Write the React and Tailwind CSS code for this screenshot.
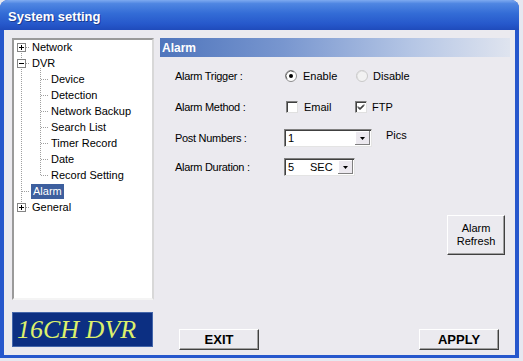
const treeRows = [
    { label: 'Network', level: 0, box: '+' },
    { label: 'DVR', level: 0, box: '-' },
    { label: 'Device', level: 1 },
    { label: 'Detection', level: 1 },
    { label: 'Network Backup', level: 1 },
    { label: 'Search List', level: 1 },
    { label: 'Timer Record', level: 1 },
    { label: 'Date', level: 1 },
    { label: 'Record Setting', level: 1 },
    { label: 'Alarm', level: 0, selected: true },
    { label: 'General', level: 0, box: '+' },
];

function TreeLines() {
    const cy = (i) => 7 + 16 * i;
    return (
        <svg className="absolute inset-0 pointer-events-none" width="140" height="260">
            <g stroke="#a0a0a0" strokeWidth="1" strokeDasharray="1 1" shapeRendering="crispEdges">
                <line x1="7.5" y1={cy(0)} x2="7.5" y2={cy(10)} />
                <line x1="26.5" y1={cy(1) + 5} x2="26.5" y2={cy(8)} />
                {treeRows.map((r, i) =>
                    r.level === 0 ? (
                        <line key={i} x1="8" y1={cy(i) + 0.5} x2="16" y2={cy(i) + 0.5} />
                    ) : (
                        <line key={i} x1="27" y1={cy(i) + 0.5} x2="35" y2={cy(i) + 0.5} />
                    )
                )}
            </g>
            {treeRows.map((r, i) =>
                r.box ? (
                    <g key={'b' + i} shapeRendering="crispEdges">
                        <rect x="3.5" y={cy(i) - 4 + 0.5} width="8" height="8" fill="#fff" stroke="#848484" />
                        <line x1="5" y1={cy(i) + 0.5} x2="10" y2={cy(i) + 0.5} stroke="#000" />
                        {r.box === '+' && (
                            <line x1="7.5" y1={cy(i) - 2} x2="7.5" y2={cy(i) + 3} stroke="#000" />
                        )}
                    </g>
                ) : null
            )}
        </svg>
    );
}

function Radio({ checked, faded }) {
    return (
        <svg width="12" height="12" viewBox="0 0 12 12">
            <circle cx="6" cy="6" r="5.5" fill={faded ? '#f2f2f2' : '#fff'} stroke={faded ? '#c8c8c8' : '#8c8c8c'} />
            <path d="M2 9 A5 5 0 0 1 9 2" fill="none" stroke={faded ? '#d8d8d8' : '#6c6c6c'} />
            {checked && <circle cx="6" cy="6" r="2" fill="#000" />}
        </svg>
    );
}

function Checkbox({ checked }) {
    return (
        <div className="w-[12px] h-[12px] bg-white border border-t-[#808080] border-l-[#808080] border-b-[#e0e0e0] border-r-[#e0e0e0] shadow-[inset_1px_1px_#404040] flex items-center justify-center">
            {checked && (
                <svg width="8" height="8" viewBox="0 0 8 8">
                    <path d="M1 3.5 L3 5.5 L7 1.5 M1 4.5 L3 6.5 L7 2.5" fill="none" stroke="#000" strokeWidth="1" />
                </svg>
            )}
        </div>
    );
}

function Combo({ width, children }) {
    return (
        <div
            className="h-[18px] bg-white border border-t-[#808080] border-l-[#808080] border-b-[#e4e4e4] border-r-[#e4e4e4] shadow-[inset_1px_1px_#404040] flex items-center"
            style={{ width }}
        >
            <div className="flex-1 pl-[3px] pt-[1px] flex items-center">{children}</div>
            <div className="w-[15px] h-[14px] mr-[1px] bg-[#ece9ef] shadow-[inset_-1px_-1px_#808080,inset_1px_1px_#fff] flex items-center justify-center">
                <svg width="5" height="3" viewBox="0 0 5 3">
                    <path d="M0 0 H5 L2.5 3 Z" fill="#000" />
                </svg>
            </div>
        </div>
    );
}

function Button({ className, children }) {
    return (
        <div
            className={
                'bg-[#ebeaef] border border-t-[#ffffff] border-l-[#ffffff] border-b-[#404040] border-r-[#404040] shadow-[inset_-1px_-1px_#a0a0a0] flex items-center justify-center text-black ' +
                className
            }
        >
            {children}
        </div>
    );
}

export default function App() {
    return (
        <div className="w-[523px] h-[361px] bg-[#e6e8f0] overflow-hidden font-['Liberation_Sans',Arial,sans-serif]">
            <div className="w-[519px] h-[358px] rounded-t-[8px] overflow-hidden bg-[#2657cc] flex flex-col">
                {/* Title bar */}
                <div className="h-[30px] shrink-0 bg-[linear-gradient(to_bottom,#7eaaf0_0%,#4f86e2_12%,#336cd6_45%,#2658cb_80%,#1f4bbb_100%)] flex items-center pl-[8px] pt-[3px]">
                    <span className="text-white font-bold text-[13px] [text-shadow:1px_1px_#1a3a90]">System setting</span>
                </div>

                {/* Body */}
                <div className="flex-1 mx-[4px] mb-[3px] bg-[#ebeaef] flex">
                    {/* Left column */}
                    <div className="w-[142px] ml-[8px] pt-[8px] flex flex-col">
                        <div className="h-[262px] border-2 border-t-[#9a9a9a] border-l-[#9a9a9a] border-b-[#f4f4f4] border-r-[#d8d8d8] bg-white relative">
                            <TreeLines />
                            <div className="relative -mt-[1px] text-[11px] text-black">
                                {treeRows.map((r, i) => (
                                    <div key={i} className="h-[16px] flex items-center" style={{ paddingLeft: r.level === 1 ? 37 : r.selected ? 17 : 18 }}>
                                        {r.selected ? (
                                            <span className="bg-[#3d5f9e] text-white px-[2px] leading-[15px]">{r.label}</span>
                                        ) : (
                                            <span className="leading-[15px]">{r.label}</span>
                                        )}
                                    </div>
                                ))}
                            </div>
                        </div>
                        <div className="mt-[12px] h-[35px] w-[141px] bg-[#0c2f82] border border-[#4466aa] flex items-center pl-[4px]">
                            <span className="font-['Liberation_Serif',serif] italic text-[26px] text-[#dcf06c] leading-none">16CH DVR</span>
                        </div>
                    </div>

                    {/* Right column */}
                    <div className="w-[350px] ml-[6px] pt-[8px] flex flex-col text-[11px] text-black">
                        <div className="h-[19px] bg-[linear-gradient(to_right,#4f75bc_0%,#7896cf_35%,#b5c6e5_72%,#dfe4ef_100%)] flex items-center pl-[2px]">
                            <span className="text-white font-bold text-[12px]">Alarm</span>
                        </div>

                        <div className="mt-[9px] h-[20px] flex items-center">
                            <span className="w-[124px] pl-[15px] tracking-[-0.3px]">Alarm Trigger :</span>
                            <div className="w-[72px] flex items-center gap-[6px] pl-[1px]">
                                <Radio checked />
                                <span>Enable</span>
                            </div>
                            <div className="flex items-center gap-[5px]">
                                <Radio faded />
                                <span>Disable</span>
                            </div>
                        </div>

                        <div className="mt-[11px] h-[20px] flex items-center">
                            <span className="w-[124px] pl-[15px] tracking-[-0.3px]">Alarm Method :</span>
                            <div className="w-[71px] flex items-center gap-[6px] pl-[2px]">
                                <Checkbox />
                                <span>Email</span>
                            </div>
                            <div className="flex items-center gap-[5px]">
                                <Checkbox checked />
                                <span>FTP</span>
                            </div>
                        </div>

                        <div className="mt-[11px] h-[20px] flex items-center">
                            <span className="w-[124px] pl-[15px] tracking-[-0.3px]">Post Numbers :</span>
                            <Combo width={88}>
                                <span>1</span>
                            </Combo>
                            <span className="ml-[14px] -mt-[6px]">Pics</span>
                        </div>

                        <div className="mt-[9px] h-[20px] flex items-center">
                            <span className="w-[124px] pl-[15px] tracking-[-0.3px]">Alarm Duration :</span>
                            <Combo width={71}>
                                <span className="w-[22px]">5</span>
                                <span>SEC</span>
                            </Combo>
                        </div>

                        <div className="mt-[38px] flex justify-end pr-[5px]">
                            <Button className="w-[58px] h-[40px] flex-col leading-[13px] text-[11px]">
                                <span>Alarm</span>
                                <span>Refresh</span>
                            </Button>
                        </div>

                        <div className="mt-auto mb-[5px] flex justify-between pl-[19px] pr-[11px]">
                            <Button className="w-[80px] h-[21px] font-bold text-[13px]">EXIT</Button>
                            <Button className="w-[80px] h-[21px] font-bold text-[13px]">APPLY</Button>
                        </div>
                    </div>
                </div>
            </div>
        </div>
    );
}
